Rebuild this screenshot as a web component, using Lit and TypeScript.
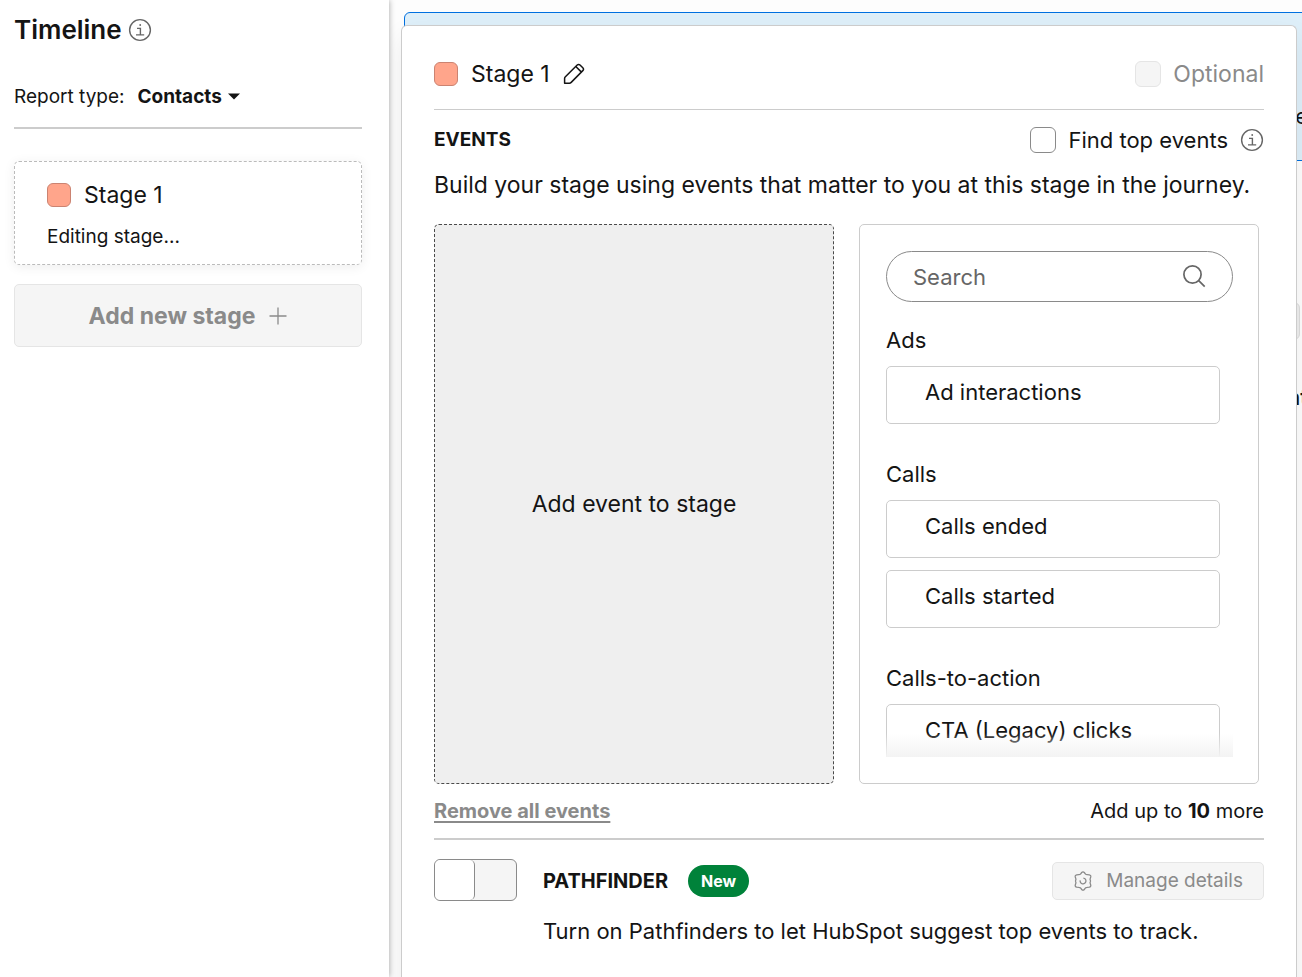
import { LitElement, html, css, svg } from "lit";
import { customElement, property } from "lit/decorators.js";

const shared = css`
  *, *::before, *::after { box-sizing: border-box; }
  h1, h2, h3, p, ul { margin: 0; padding: 0; font: inherit; }
  button, input, select { font: inherit; color: inherit; margin: 0; }
  svg { display: block; flex: none; fill: none; stroke: currentColor; }
  .row { display: flex; align-items: center; }
  .between { justify-content: space-between; }
  .swatch {
    width: 24px; height: 24px; flex: none;
    border: 1px solid #cb8371; border-radius: 6px; background: #ffa58b;
  }
  .small { font-size: 19px; }
  .medium { font-size: 20px; }
  .large { font-size: 23px; }
  .strong { font-weight: 700; }
`;

const infoIcon = svg`<svg width="24" height="24" viewBox="0 0 24 24" stroke-width="1.4" aria-hidden="true">
  <circle cx="12" cy="12" r="10.4"/>
  <path d="M9 10.4h3.4v6.4M8 16.9h8.2"/>
  <circle cx="12.2" cy="7" r=".9" fill="currentColor" stroke="none"/>
</svg>`;

interface EventGroup { name: string; events: string[]; }

const groups: EventGroup[] = [
  { name: "Ads", events: ["Ad interactions"] },
  { name: "Calls", events: ["Calls ended", "Calls started"] },
  { name: "Calls-to-action", events: ["CTA (Legacy) clicks"] },
];

@customElement("timeline-sidebar")
class TimelineSidebar extends LitElement {
  static styles = [shared, css`
    :host {
      display: block; background: #fff; padding: 14px 27px 14px 14px;
      box-shadow: 0 0 6px rgba(0, 0, 0, .36); z-index: 1;
    }
    .title { gap: 6px; font-size: 26px; font-weight: 600; line-height: 32px; }
    .info { color: #666; }
    .report { margin-top: 35px; padding-bottom: 14px; border-bottom: 2px solid #ccc; gap: 13px; }
    .picker { position: relative; }
    .select {
      appearance: none; border: 0; background: none; padding: 0 18px 0 0;
      font-weight: 700; line-height: 32px; height: 32px; field-sizing: content;
    }
    .caret { position: absolute; right: 0; top: 12px; fill: currentColor; stroke: none; pointer-events: none; }
    .card {
      margin-top: 32px; padding: 17px 32px 11px; border: 1px dashed #bbb; border-radius: 5px;
      box-shadow: 0 2px 12px rgba(0, 0, 0, .07);
    }
    .name { gap: 13px; }
    .status { margin-top: 10px; }
    .add {
      margin-top: 19px; width: 100%; height: 63px; gap: 14px; justify-content: center; padding: 0;
      border: 1px solid #e5e5e5; border-radius: 5px; background: #f5f5f5;
      color: #8a8a8a; font-size: 23px; font-weight: 700;
    }
  `];

  render() {
    return html`
      <h1 class="row title">Timeline <span class="info">${infoIcon}</span></h1>
      <div class="row small report">
        <label for="report">Report type:</label>
        <span class="picker">
          <select id="report" class="select"><option>Contacts</option></select>
          <svg class="caret" width="12" height="7" viewBox="0 0 12 7" aria-hidden="true"><path d="M0 .5h12L6 6.5z"/></svg>
        </span>
      </div>
      <section class="card">
        <h2 class="row large name"><span class="swatch"></span>Stage 1</h2>
        <p class="small status">Editing stage...</p>
      </section>
      <button class="row add" disabled>
        Add new stage
        <svg width="18" height="18" viewBox="0 0 18 18" stroke-width="1.3" aria-hidden="true"><path d="M9 .5v17M.5 9h17"/></svg>
      </button>
    `;
  }
}

@customElement("event-picker")
class EventPicker extends LitElement {
  @property({ attribute: false }) groups: EventGroup[] = [];

  static styles = [shared, css`
    :host {
      display: flex; flex-direction: column; padding: 26px 25px 26px 26px; min-height: 0; min-width: 0;
      border: 1px solid #ccc; border-radius: 5px;
    }
    .search {
      flex: none; height: 51px; padding: 0 26px; border: 1px solid #8a8a8a; border-radius: 26px;
    }
    .field { flex: 1; min-width: 0; border: 0; outline: 0; background: none; padding: 0; }
    .field::placeholder { color: #666; opacity: 1; }
    .search svg { color: #666; }
    .list { position: relative; flex: 1; min-height: 0; overflow: hidden; padding: 22px 13px 0 0; }
    .list::after {
      content: ""; position: absolute; inset: auto 0 0 0; height: 24px;
      background: linear-gradient(rgba(243, 243, 243, 0), #f3f3f3);
    }
    .group { display: flex; flex-direction: column; gap: 12px; margin-bottom: 34px; }
    .heading { margin-bottom: -2px; }
    .event {
      height: 58px; padding: 0 38px 6px; text-align: left;
      border: 1px solid #ccc; border-radius: 5px; background: #fff;
    }
  `];

  render() {
    return html`
      <div class="row search">
        <input class="field" type="text" placeholder="Search" aria-label="Search events" />
        <svg width="24" height="24" viewBox="0 0 24 24" stroke-width="1.7" aria-hidden="true">
          <circle cx="10.500" cy="9.500" r="8.600"/><path d="M16.700 15.700l6 6"/>
        </svg>
      </div>
      <div class="list">
        ${this.groups.map((g) => html`
          <section class="group">
            <h3 class="heading">${g.name}</h3>
            ${g.events.map((e) => html`<button class="event">${e}</button>`)}
          </section>`)}
      </div>
    `;
  }
}

@customElement("stage-editor")
class StageEditor extends LitElement {
  static styles = [shared, css`
    :host {
      display: block; background: #fff; padding: 32px 32px 0;
      border: 1px solid #ccc; border-bottom: 0; border-radius: 6px 6px 0 0;
      box-shadow: 0 12px 28px rgba(0, 0, 0, .07);
    }
    .header { padding-bottom: 19px; border-bottom: 1px solid #ccc; }
    .name { gap: 13px; }
    .edit { border: 0; background: none; padding: 0; color: #141414; }
    .check { gap: 12px; }
    .check.off { color: #8a8a8a; }
    .box {
      appearance: none; width: 26px; height: 26px; flex: none;
      border: 1px solid #8a8a8a; border-radius: 6px; background: #fff;
    }
    .box:disabled { border-color: #e5e5e5; background: #f5f5f5; }
    .events { margin-top: 14px; }
    .find { gap: 12px; }
    .info { color: #666; }
    .lead { margin-top: 13px; }
    .columns {
      display: grid; grid-template-columns: 1fr 1fr; gap: 25px; height: 560px;
      margin-top: 23px; padding-right: 5px;
    }
    .drop {
      display: flex; align-items: center; justify-content: center;
      border: 1px dashed #4a4a4a; border-radius: 5px; background: #efefef;
    }
    .footer { padding: 11px 0; border-bottom: 2px solid #ccc; }
    .remove {
      border: 0; background: none; padding: 0; color: #8a8a8a;
      text-decoration: underline; text-underline-offset: 3px;
    }
    .remove.medium { font-size: 20px; font-weight: 700; }
    .pathfinder {
      display: grid; grid-template-columns: 83px 1fr; column-gap: 26px; row-gap: 14px;
      align-items: center; margin-top: 19px; padding-bottom: 32px;
    }
    .toggle {
      appearance: none; width: 83px; height: 42px; overflow: hidden;
      border: 1px solid #8a8a8a; border-radius: 6px; background: #f5f5f5;
    }
    .toggle::before {
      content: ""; display: block; width: 40px; height: 40px;
      border-right: 1px solid #8a8a8a; border-radius: 5px; background: #fff;
    }
    .bar { padding-top: 2px; }
    .label { gap: 20px; }
    .badge {
      padding: 0 13px; border-radius: 16px; background: #00823a; color: #fff; font-size: 16px; line-height: 32px;
    }
    .manage {
      height: 38px; gap: 13px; padding: 0 20px;
      border: 1px solid #e5e5e5; border-radius: 5px; background: #f5f5f5; color: #8a8a8a;
    }
    .text { grid-column: 2; }
  `];

  render() {
    return html`
      <header class="row between header">
        <div class="row name">
          <span class="swatch"></span>
          <h2 class="large">Stage 1</h2>
          <button class="edit" aria-label="Rename stage">
            <svg width="22" height="22" viewBox="0 0 22 22" stroke-width="1.5" stroke-linejoin="round" aria-hidden="true">
              <path d="M1.6 20.2v-4.6c0-.7.3-1.3.8-1.8L14.2 2c.8-.8 2-.8 2.8 0l2.8 2.8c.8.8.8 2 0 2.8L8.200 19.400c-.5.5-1.100.8-1.800.8zM12.800 3.500l5.400 5.400"/>
            </svg>
          </button>
        </div>
        <label class="row large check off"><input class="box" type="checkbox" disabled />Optional</label>
      </header>

      <div class="row between events">
        <h3 class="small strong">EVENTS</h3>
        <div class="row find">
          <label class="row check"><input class="box" type="checkbox" />Find top events</label>
          <span class="info">${infoIcon}</span>
        </div>
      </div>
      <p class="large lead">Build your stage using events that matter to you at this stage in the journey.</p>

      <div class="columns">
        <div class="large drop">Add event to stage</div>
        <event-picker .groups=${groups}></event-picker>
      </div>

      <div class="row between footer">
        <button class="medium remove">Remove all events</button>
        <span class="medium">Add up to <b>10</b> more</span>
      </div>

      <div class="pathfinder">
        <input id="pathfinder" class="toggle" type="checkbox" role="switch" />
        <div class="row between bar">
          <div class="row label">
            <label class="medium strong" for="pathfinder">PATHFINDER</label>
            <span class="badge strong">New</span>
          </div>
          <button class="row small manage" disabled>
            <svg width="20" height="20" viewBox="0 0 20 20" stroke-width="1.3" stroke-linejoin="round" aria-hidden="true">
              <path d="M8.700 1.500Q10 .1 11.300 1.500L12.300 2.800Q13 3.700 14.200 3.700L16.300 3.800Q18.200 4.200 17.700 6L17.200 7.600Q16.900 8.500 17.300 9.200Q17.700 10 17.300 10.800Q16.900 11.500 17.200 12.400L17.700 14Q18.200 15.800 16.300 16.200L14.200 16.300Q13 16.300 12.300 17.200L11.300 18.500Q10 19.900 8.700 18.500L7.700 17.200Q7 16.300 5.800 16.300L3.700 16.200Q1.800 15.800 2.300 14L2.800 12.400Q3.100 11.500 2.700 10.800Q2.300 10 2.700 9.200Q3.100 8.500 2.800 7.600L2.300 6Q1.800 4.200 3.700 3.800L5.800 3.700Q7 3.700 7.700 2.800z"/>
              <path d="M10.400 7.100a2.900 2.900 0 1 1-3.200 2.300"/>
            </svg>
            Manage details
          </button>
        </div>
        <p class="text">Turn on Pathfinders to let HubSpot suggest top events to track.</p>
      </div>
    `;
  }
}

@customElement("app-root")
class AppRoot extends LitElement {
  static styles = [shared, css`
    :host {
      display: grid; grid-template-columns: 389px 1fr; height: 100vh; overflow: hidden;
      font-family: Inter, "Open Sans", sans-serif; font-size: 22px; line-height: 32px; color: #141414; background: #fff;
    }
    .stage { position: relative; overflow: hidden; padding: 12px 0 0 15px; background: #fdfdfd; }
    .banner {
      height: 149px; margin-right: -15px; border: 1px solid #0070e0; border-radius: 6px; background: #deeff9;
      padding: 87px 8px 0 0; text-align: right;
    }
    .peek { display: flex; flex-direction: column; align-items: flex-end; font-weight: 600; }
    .chip {
      width: 60px; height: 38px; margin: 141px 2px 41px 0; border: 1px solid #ddd; border-radius: 6px; background: #eee;
    }
    .metric { margin-right: -6px; }
    .editor { position: absolute; top: 25px; left: 12px; right: 5px; min-height: 100%; }
  `];

  render() {
    return html`
      <timeline-sidebar></timeline-sidebar>
      <main class="stage">
        <div class="banner">e</div>
        <div class="peek"><div class="chip"></div><div class="metric">nt</div></div>
        <stage-editor class="editor"></stage-editor>
      </main>
    `;
  }
}
